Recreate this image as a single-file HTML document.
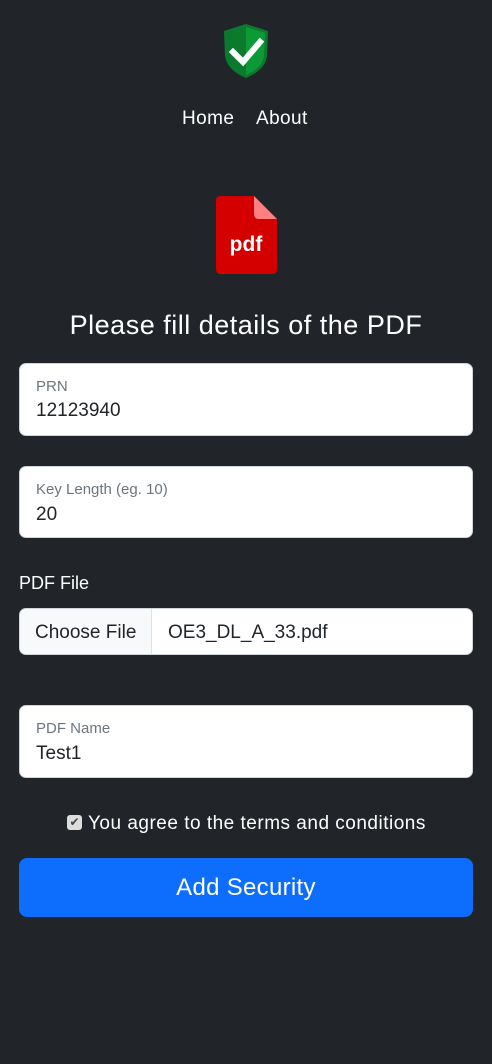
<!DOCTYPE html>
<html><head><meta charset="utf-8"><style>
*{box-sizing:border-box;margin:0;padding:0}
body{width:492px;height:1064px;background:#212529;font-family:"Liberation Sans",sans-serif;position:relative;overflow:hidden;color:#fff}
.a{position:absolute}
.box{position:absolute;left:19px;width:454px;background:#fff;border:1px solid #ced4da;border-radius:7px}
.lbl{position:absolute;left:16px;font-size:15px;color:#6c757d}
.val{position:absolute;left:16px;font-size:19px;color:#212529}
</style></head><body>
<svg class="a" style="left:221px;top:22px" width="50" height="58" viewBox="0 0 50 58">
<path d="M25 2 L47 9 L46 34 Q44 48 25 56 Q6 48 4 34 L3 9 Z" fill="#0b7a2c"/>
<path d="M25 5 L44 11 L43 34 Q41 46 25 53 Z" fill="#0c9a37"/>
<path d="M12 30 L22 40 L39 20" stroke="#fff" stroke-width="6" fill="none" stroke-linecap="square"/>
</svg>
<div class="a" style="left:182px;top:108px;font-size:19px;letter-spacing:0.4px">Home</div>
<div class="a" style="left:256px;top:108px;font-size:19px;letter-spacing:0.4px">About</div>
<svg class="a" style="left:216px;top:196px" width="61" height="78" viewBox="0 0 61 78">
<path d="M5 0 H38 L61 23 V73 Q61 78 56 78 H5 Q0 78 0 73 V5 Q0 0 5 0 Z" fill="#d40000"/>
<path d="M38 0 L61 23 H43 Q38 23 38 18 Z" fill="#ff8080"/>
<text x="30" y="55" text-anchor="middle" font-family="Liberation Sans" font-weight="bold" font-size="21" fill="#fff">pdf</text>
</svg>
<div class="a" style="left:0;width:492px;text-align:center;top:310px;font-size:27px;letter-spacing:0.5px">Please fill details of the PDF</div>
<div class="box" style="top:363px;height:73px"><div class="lbl" style="top:14px">PRN</div><div class="val" style="top:36px">12123940</div></div>
<div class="box" style="top:466px;height:72px"><div class="lbl" style="top:14px">Key Length (eg. 10)</div><div class="val" style="top:37px">20</div></div>
<div class="a" style="left:19px;top:573px;font-size:18px">PDF File</div>
<div class="box" style="top:608px;height:47px;overflow:hidden"><div class="a" style="left:0;top:0;width:132px;height:45px;background:#f8f9fa;border-right:1px solid #dee2e6"></div><div class="val" style="top:13px;left:15px">Choose File</div><div class="val" style="top:13px;left:148px">OE3_DL_A_33.pdf</div></div>
<div class="box" style="top:705px;height:73px"><div class="lbl" style="top:14px">PDF Name</div><div class="val" style="top:37px">Test1</div></div>
<div class="a" style="left:67px;top:815px;width:15px;height:15px;background:#ddd;border-radius:3px;color:#444;font-size:12px;text-align:center;line-height:15px">✔</div>
<div class="a" style="left:88px;top:813px;font-size:19px;letter-spacing:0.5px">You agree to the terms and conditions</div>
<div class="a" style="left:19px;top:858px;width:454px;height:59px;background:#0d6efd;border-radius:8px;text-align:center;line-height:59px;font-size:24px;letter-spacing:0.3px">Add Security</div>
</body></html>
